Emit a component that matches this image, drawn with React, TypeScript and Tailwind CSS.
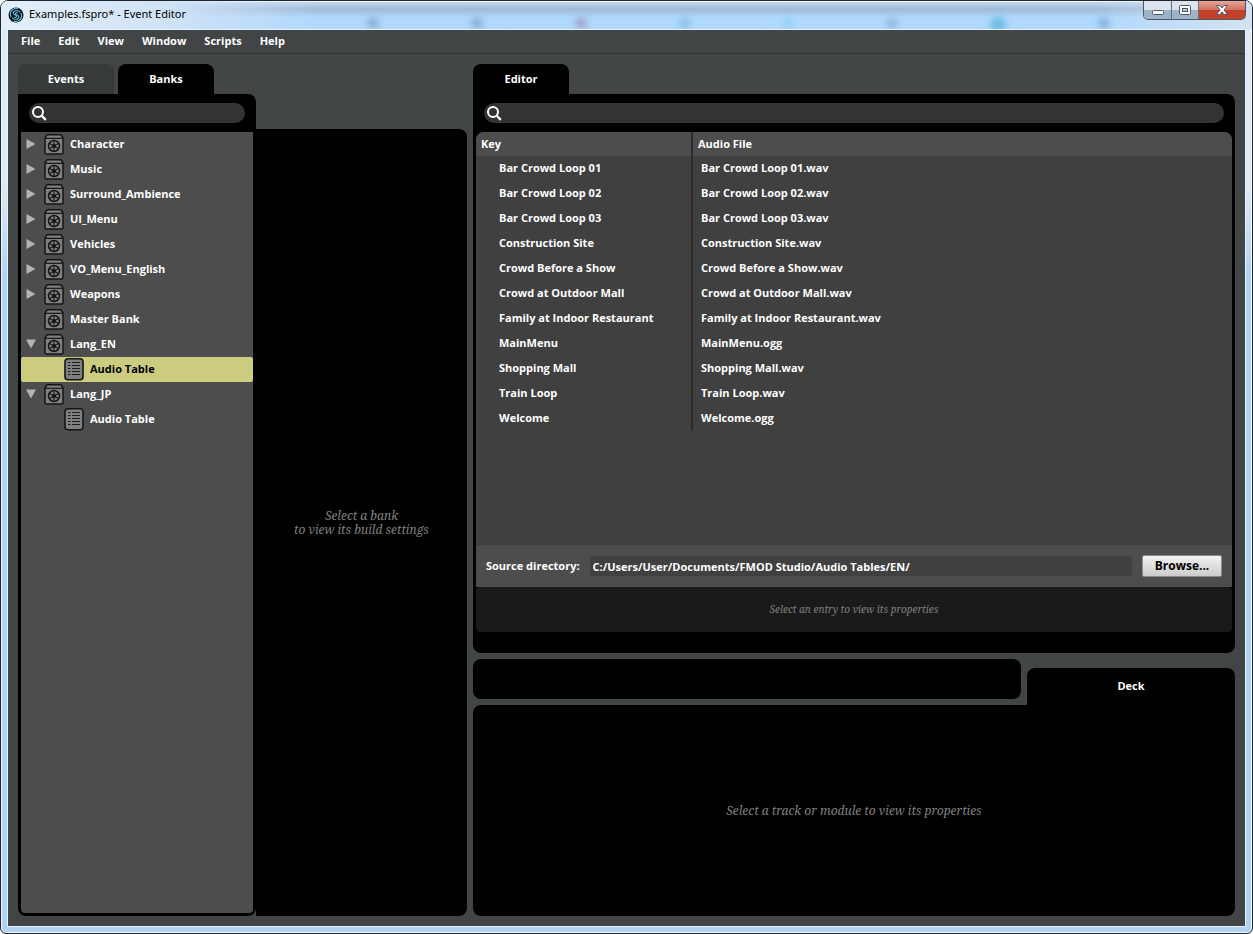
import { Fragment } from 'react';

type TreeNode = {
  name: string;
  kind: 'bank' | 'table';
  state?: 'closed' | 'open';
  selected?: boolean;
};

const MENUS = ['File', 'Edit', 'View', 'Window', 'Scripts', 'Help'];

const TREE: TreeNode[] = [
  { name: 'Character', kind: 'bank', state: 'closed' },
  { name: 'Music', kind: 'bank', state: 'closed' },
  { name: 'Surround_Ambience', kind: 'bank', state: 'closed' },
  { name: 'UI_Menu', kind: 'bank', state: 'closed' },
  { name: 'Vehicles', kind: 'bank', state: 'closed' },
  { name: 'VO_Menu_English', kind: 'bank', state: 'closed' },
  { name: 'Weapons', kind: 'bank', state: 'closed' },
  { name: 'Master Bank', kind: 'bank' },
  { name: 'Lang_EN', kind: 'bank', state: 'open' },
  { name: 'Audio Table', kind: 'table', selected: true },
  { name: 'Lang_JP', kind: 'bank', state: 'open' },
  { name: 'Audio Table', kind: 'table' },
];

const ENTRIES = [
  ['Bar Crowd Loop 01', 'Bar Crowd Loop 01.wav'],
  ['Bar Crowd Loop 02', 'Bar Crowd Loop 02.wav'],
  ['Bar Crowd Loop 03', 'Bar Crowd Loop 03.wav'],
  ['Construction Site', 'Construction Site.wav'],
  ['Crowd Before a Show', 'Crowd Before a Show.wav'],
  ['Crowd at Outdoor Mall', 'Crowd at Outdoor Mall.wav'],
  ['Family at Indoor Restaurant', 'Family at Indoor Restaurant.wav'],
  ['MainMenu', 'MainMenu.ogg'],
  ['Shopping Mall', 'Shopping Mall.wav'],
  ['Train Loop', 'Train Loop.wav'],
  ['Welcome', 'Welcome.ogg'],
];

function AppLogo() {
  return (
    <svg width="16" height="16" viewBox="0 0 16 16" fill="none" aria-hidden="true">
      <circle cx="8" cy="8" r="7.5" fill="#0b1217" />
      <g stroke="#62bfe0" strokeWidth="1.1" strokeLinecap="round">
        <path d="M11.8 5C10.4 3.2 5.4 3.2 5.2 5.9C5.1 8 8.2 7.7 8.6 9C8.9 10 7.6 10.6 6.6 10.2" />
        <path d="M4.2 11C5.6 12.8 10.6 12.8 10.8 10.1C10.9 8 7.8 8.3 7.4 7C7.1 6 8.4 5.4 9.4 5.8" />
        <path d="M9.8 1.7C6 .8 2.6 3.2 2.4 6.6C2.3 8 2.6 9 3 9.6" />
        <path d="M6.2 14.3C10 15.2 13.4 12.8 13.6 9.4C13.7 8 13.4 7 13 6.4" />
      </g>
    </svg>
  );
}

function BankIcon() {
  return (
    <svg width="20" height="22" viewBox="0 0 20 22" fill="none" aria-hidden="true">
      <path d="M3 1.8H17L19 5V19.5Q19 21 17.5 21H2.5Q1 21 1 19.5V5Z" fill="#808080" stroke="#141414" strokeWidth="1.5" strokeLinejoin="round" />
      <path d="M1.5 5.3H18.5" stroke="#141414" strokeWidth="1.2" />
      <circle cx="10" cy="13" r="5.5" stroke="#141414" strokeWidth="1.5" />
      <path d="M10 8V18M5.7 10.5L14.3 15.5M5.7 15.5L14.3 10.5" stroke="#141414" strokeWidth="1.1" />
      <circle cx="10" cy="13" r="2" fill="#141414" />
    </svg>
  );
}

function TableIcon() {
  return (
    <svg width="20" height="24" viewBox="0 0 20 24" fill="none" aria-hidden="true">
      <rect x="1" y="1.8" width="18" height="21" rx="3" fill="#808080" stroke="#141414" strokeWidth="1.6" />
      <path d="M4 5.5H6.5M4 8.5H6.5M4 11.5H6.5M4 14.5H6.5M4 17.5H6.5M8 5.5H16M8 8.5H16M8 11.5H16M8 14.5H16M8 17.5H16" stroke="#1c1c1c" />
    </svg>
  );
}

function Search({ label }: { label: string }) {
  return (
    <label className="flex h-5 items-center rounded-full bg-[#333333] pl-[2px]">
      <svg width="16" height="16" viewBox="0 0 16 16" fill="none" stroke="#fff" strokeWidth="2" aria-hidden="true">
        <circle cx="7" cy="7" r="5" />
        <path d="M10.5 10.5L14.8 14.8" strokeWidth="2.4" />
      </svg>
      <input type="text" aria-label={label} className="min-w-0 flex-1 bg-transparent px-2 outline-none" />
    </label>
  );
}

function TitleBar() {
  return (
    <header className="relative flex h-[28px] items-start justify-between overflow-hidden bg-gradient-to-b from-[#c6daf3] via-[#9fbbd8] via-30% to-[#b0d9fd] to-60% pl-[7px] shadow-[inset_0_1px_0_#f4faff]">
      {/* Desktop icons showing through the glass */}
      <div className="absolute inset-x-0 -bottom-1 flex justify-around pr-24 pl-80 opacity-70 blur-[3px]">
        <span className="size-3 rounded-full bg-[#7f9cc0]" />
        <span className="size-3 rounded-full bg-[#7f9cc0]" />
        <span className="size-3 rounded-full bg-[#9d8fb4]" />
        <span className="size-3 rounded-full bg-[#86b8e6]" />
        <span className="size-3 rounded-full bg-[#8fcdf2]" />
        <span className="size-3 rounded-full bg-[#8fa9d4]" />
        <span className="size-4 rounded-full bg-[#56b0dc]" />
        <span className="size-3 rounded-full bg-[#6f9fd2]" />
      </div>
      <div className="absolute inset-y-0 left-0 w-80 bg-gradient-to-r from-[#e3effb] via-[#d0e3f7] via-50% to-transparent" />
      <div className="absolute inset-y-0 right-0 w-40 bg-gradient-to-l from-[#d3e2f2] to-transparent" />
      <div className="relative flex h-[27px] items-center gap-[5px] font-['Noto_Sans',sans-serif] text-[11px] font-normal text-black">
        <AppLogo />
        <h1>Examples.fspro* - Event Editor</h1>
      </div>
      <div className="relative mr-[6px] flex h-[19px] overflow-hidden rounded-b-[5px] border border-t-0 border-[#4b5868]">
        <button aria-label="Minimize" className="flex w-7 items-center justify-center border-r border-[#5f6e80] bg-gradient-to-b from-[#dbe3ec] from-50% to-[#9eb2c8] to-50%">
          <svg width="12" height="12" viewBox="0 0 12 12"><rect x=".5" y="6.5" width="11" height="4" rx="1" fill="#fff" stroke="#4c5468" /></svg>
        </button>
        <button aria-label="Maximize" className="flex w-[27px] items-center justify-center border-r border-[#5f6e80] bg-gradient-to-b from-[#dbe3ec] from-50% to-[#9eb2c8] to-50%">
          <svg width="12" height="12" viewBox="0 0 12 12">
            <rect x=".5" y="1.5" width="11" height="9" rx="1" fill="#fff" stroke="#4c5468" />
            <rect x="3.5" y="4.5" width="5" height="3" fill="#b9c9da" stroke="#4c5468" />
          </svg>
        </button>
        <button aria-label="Close" className="flex w-[46px] items-center justify-center bg-gradient-to-b from-[#e3a69a] via-[#d1705f] via-50% to-[#c3402a] to-50%">
          <svg width="14" height="12" viewBox="0 0 14 12"><path d="M1.5 1.5H5L7 4L9 1.5H12.5L9 6L12.5 10.5H9L7 8L5 10.5H1.5L5 6Z" fill="#fff" stroke="#4c5468" /></svg>
        </button>
      </div>
    </header>
  );
}

function BankTree() {
  return (
    <ul className="flex-1 overflow-hidden rounded-b-[4px] bg-[#4d4d4d]">
      {TREE.map((node, i) => (
        <li
          key={i}
          className={`flex h-[25px] items-center pb-px ${node.selected ? 'rounded-[2px] bg-[#cccc80] text-black' : ''}`}
        >
          {node.state && (
            <button aria-label={`Toggle ${node.name}`} className="ml-[5px] w-[10px]">
              <svg width="10" height="10" viewBox="0 0 10 10" fill="#b3b3b3" aria-hidden="true">
                {node.state === 'open' ? <path d="M0 .5H10L5 9.5Z" /> : <path d="M.5 0V10L9.5 5Z" />}
              </svg>
            </button>
          )}
          <a
            href="#"
            className={`flex items-center gap-[6px] ${node.kind === 'table' ? 'ml-[43px]' : node.state ? 'ml-2' : 'ml-[23px]'}`}
          >
            {node.kind === 'table' ? <TableIcon /> : <BankIcon />}
            <span>{node.name}</span>
          </a>
        </li>
      ))}
    </ul>
  );
}

function Sidebar() {
  return (
    <section className="flex w-[449px] shrink-0 flex-col">
      <nav className="flex h-[30px] gap-1">
        <button className="w-24 rounded-t-lg bg-[#363a3b]">Events</button>
        <button className="w-24 rounded-t-lg bg-black">Banks</button>
      </nav>
      <div className="flex flex-1">
        <div className="flex w-[238px] flex-col rounded-tr-lg rounded-b-lg bg-black px-[3px] pb-[3px]">
          <div className="px-2 py-[9px]">
            <Search label="Search banks" />
          </div>
          <BankTree />
        </div>
        <div className="mt-[35px] flex flex-1 items-center justify-center rounded-tr-lg rounded-br-lg bg-black">
          <p className="text-center font-['Droid_Serif','Noto_Serif','Liberation_Serif',serif] text-xs leading-[14px] font-normal text-[#808080] italic">
            Select a bank
            <br />
            to view its build settings
          </p>
        </div>
      </div>
    </section>
  );
}

function AudioTable() {
  return (
    <table className="w-full table-fixed border-collapse text-left">
      <thead className="h-6 bg-[#4d4d4d]">
        <tr>
          <th className="w-[216px] border-r-2 border-[#2b2b2b] pl-[5px]">Key</th>
          <th className="pl-[5px]">Audio File</th>
        </tr>
      </thead>
      <tbody>
        {ENTRIES.map(([key, file]) => (
          <tr key={key} className="h-[25px]">
            <td className="border-r-2 border-[#2b2b2b] pl-[23px]">{key}</td>
            <td className="pl-2">{file}</td>
          </tr>
        ))}
      </tbody>
    </table>
  );
}

function Editor() {
  return (
    <section className="flex flex-col">
      <nav className="flex h-[30px]">
        <button className="w-24 rounded-t-lg bg-black">Editor</button>
      </nav>
      <div className="rounded-tr-lg rounded-b-lg bg-black px-[3px] pb-[21px]">
        <div className="px-2 py-[9px]">
          <Search label="Search entries" />
        </div>
        <div className="min-h-[413px] overflow-hidden rounded-t-lg bg-[#404040]">
          <AudioTable />
        </div>
        <div className="flex h-[42px] items-center gap-[10px] bg-[#4d4d4d] px-[10px]">
          <label htmlFor="source">Source directory:</label>
          <input
            id="source"
            type="text"
            defaultValue="C:/Users/User/Documents/FMOD Studio/Audio Tables/EN/"
            className="h-5 min-w-0 flex-1 rounded-[3px] bg-[#404040] px-[3px] outline-none"
          />
          <button className="h-[22px] w-20 rounded-[2px] border border-[#8c8c8c] bg-gradient-to-b from-[#f2f2f2] to-[#cccccc] text-xs text-black">
            Browse...
          </button>
        </div>
        <p className="flex h-[45px] items-center justify-center rounded-[4px] bg-[#1a1a1a] font-['Droid_Serif','Noto_Serif','Liberation_Serif',serif] text-[10px] font-normal text-[#808080] italic">
          Select an entry to view its properties
        </p>
      </div>
    </section>
  );
}

function Deck() {
  return (
    <Fragment>
      <div className="mt-[6px] flex h-[46px] gap-[6px]">
        <div className="h-10 flex-1 rounded-lg bg-black" />
        <button className="mt-[9px] w-[208px] rounded-t-lg bg-black">Deck</button>
      </div>
      <section className="flex min-h-[120px] flex-1 items-center justify-center rounded-tl-lg rounded-b-lg bg-black">
        <p className="font-['Droid_Serif','Noto_Serif','Liberation_Serif',serif] text-xs font-normal text-[#808080] italic">
          Select a track or module to view its properties
        </p>
      </section>
    </Fragment>
  );
}

export default function App() {
  return (
    <div className="flex min-h-screen flex-col overflow-hidden rounded-t-lg rounded-b-[6px] border border-[#20242c] bg-gradient-to-b from-[#dce9f7] from-20% to-[#b0d2f4] to-30% font-['Open_Sans',sans-serif] text-[11px] font-bold text-white shadow-[inset_0_0_0_1px_#f4faff]">
      <TitleBar />
      <div className="mx-[6px] mb-[6px] flex flex-1 flex-col border border-[#e4f3ff] bg-[#414545]">
        <nav className="flex h-6 items-center gap-[18px] border-b border-[#303434] px-[13px]">
          {MENUS.map((menu) => (
            <button key={menu}>{menu}</button>
          ))}
        </nav>
        <main className="flex flex-1 gap-[6px] px-[10px] pt-[10px] pb-[10px]">
          <Sidebar />
          <div className="flex min-w-0 flex-1 flex-col">
            <Editor />
            <Deck />
          </div>
        </main>
      </div>
    </div>
  );
}
